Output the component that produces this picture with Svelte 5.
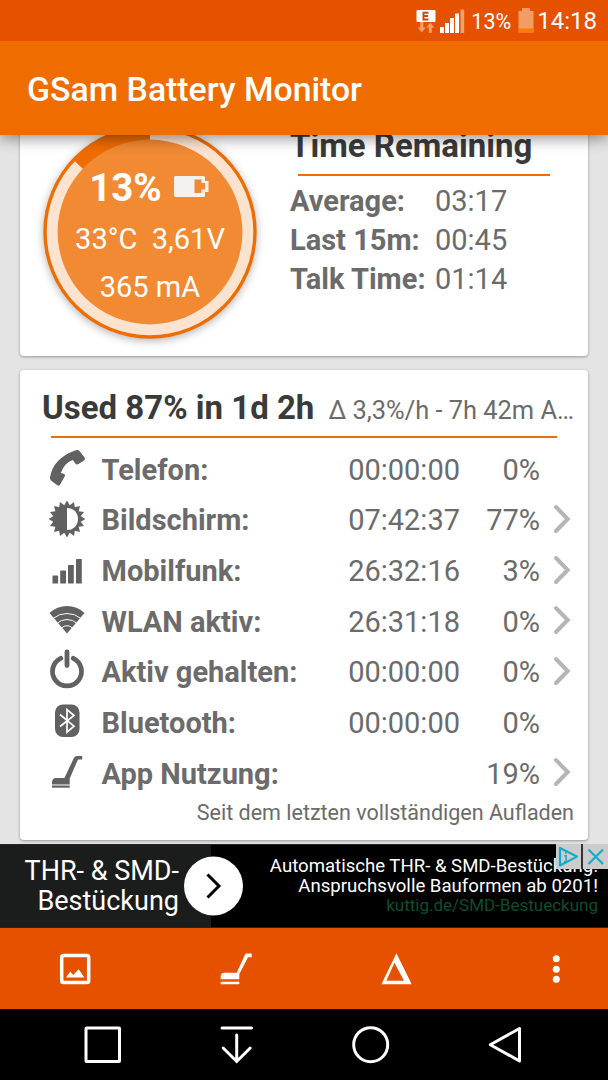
<script lang="ts">
    const remaining = [
        { label: 'Average:', time: '03:17' },
        { label: 'Last 15m:', time: '00:45' },
        { label: 'Talk Time:', time: '01:14' },
    ];

    const usage = [
        { icon: 'phone', label: 'Telefon:', time: '00:00:00', percent: '0%', link: false },
        { icon: 'screen', label: 'Bildschirm:', time: '07:42:37', percent: '77%', link: true },
        { icon: 'signal', label: 'Mobilfunk:', time: '26:32:16', percent: '3%', link: true },
        { icon: 'wifi', label: 'WLAN aktiv:', time: '26:31:18', percent: '0%', link: true },
        { icon: 'power', label: 'Aktiv gehalten:', time: '00:00:00', percent: '0%', link: true },
        { icon: 'bluetooth', label: 'Bluetooth:', time: '00:00:00', percent: '0%', link: false },
        { icon: 'app', label: 'App Nutzung:', time: '', percent: '19%', link: true },
    ];

    // Spiky rim of the brightness icon
    const spikes = 16;
    const sun = Array.from({ length: spikes * 2 }, (_, i) => {
        const r = i % 2 ? 14 : 18.4;
        const a = (Math.PI * i) / spikes;
        return `${(18 + r * Math.sin(a)).toFixed(2)},${(18 - r * Math.cos(a)).toFixed(2)}`;
    }).join(' ');
</script>

<div class="screen">
    <div class="status">
        <svg class="network" width="50" height="26" viewBox="415 7 50 26">
            <rect x="416.5" y="9" width="19" height="12" rx="1" fill="#fff" />
            <path d="M428.5 11.7h-5v6.8h5M423.5 15h4.5" fill="none" stroke="#c24a0c" stroke-width="1.9" />
            <path d="M420.3 21h3v5.5h2.4l-3.9 5-3.9-5h2.4zM428.8 32v-5.5h-2.4l3.9-5 3.9 5h-2.4v5.5z" fill="#f5a06a" />
            <path d="M440 26h3.8v6H440zM445 22h4v10h-4zM450 17h4v15h-4zM455 12.5h4V32h-4z" fill="#fff" />
            <path d="M460.5 8.5h3.7V32h-3.7z" fill="#f5a06a" />
        </svg>
        <span class="level">13%</span>
        <svg width="16" height="25" viewBox="0 0 16 25">
            <path d="M4 0h8v3h3.5v21.5H.5V3H4z" fill="#f29c66" />
            <path d="M.5 20.5h15v4H.5z" fill="#ff7a00" />
        </svg>
        <span class="clock">14:18</span>
    </div>

    <header>
        <h1>GSam Battery Monitor</h1>
    </header>

    <main>
        <section class="card summary">
            <div class="gauge">
                <svg width="216" height="216" viewBox="-108 -108 216 216">
                    <circle r="106.7" fill="#ef6c00" />
                    <circle r="103.3" fill="#fce3cf" />
                    <path d="M0 0V-105A105 105 0 0 0-76.5-71.9z" fill="#ef6c00" />
                    <circle r="92.4" fill="#f28a33" />
                </svg>
                <div class="readings">
                    <div class="charge">
                        13%
                        <svg width="35" height="21" viewBox="0 0 35 21">
                            <path fill-rule="evenodd" d="M1.5 0h28q1.5 0 1.5 1.5V5h3.5v11H31v3.5q0 1.5-1.5 1.5h-28Q0 21 0 19.5v-18Q0 0 1.5 0zM20.5 3.5V17h7v-3.5H31V7h-3.5V3.5z" fill="#f5f1ee" />
                        </svg>
                    </div>
                    <div>33°C&nbsp; 3,61V</div>
                    <div>365 mA</div>
                </div>
            </div>
            <div class="remaining">
                <h2>Time Remaining</h2>
                <hr />
                {#each remaining as row}
                    <div class="estimate">
                        <b>{row.label}</b>
                        <span>{row.time}</span>
                    </div>
                {/each}
            </div>
        </section>

        <section class="card usage">
            <div class="heading">
                <h2>Used 87% in 1d 2h</h2>
                <span>Δ 3,3%/h - 7h 42m A…</span>
            </div>
            <hr />
            {#each usage as row}
                <div class="row">
                    <svg class="icon" width="36" height="36" viewBox="0 0 36 36">
                        {#if row.icon === 'phone'}
                            <path d="M26 .5q3-1.3 4.5.5l5 6.5q1.3 1.7-.5 3L29.5 14q-1.8 1-3.2-.5L23.8 10q-8 2.5-12 13l3 .8q2 .7 1 2.500l-4.500 8q-1.300 2.200-3.300.8l-5.500-4.100q-1.800-1.500-1.500-3.500Q4 8.500 26 .5z" />
                        {:else if row.icon === 'screen'}
                            <polygon points={sun} />
                            <path d="M18 7c7 0 11 5 11 11s-4 11-11 11z" fill="#fff" />
                        {:else if row.icon === 'signal'}
                            <rect x="3.5" y="24.5" width="5.6" height="8" rx=".6" />
                            <rect x="11.2" y="19.5" width="5.8" height="13" rx=".6" />
                            <rect x="19" y="14" width="5.8" height="18.5" rx=".6" />
                            <rect x="27" y="8" width="5.8" height="24.5" rx=".6" />
                        {:else if row.icon === 'wifi'}
                            <path d="M18 31.5.5 11Q8 4 18 4t17.5 7z" />
                            <path d="M4 16.500Q10 11.500 18 11.500t14 5M8 21.500q4-4 10-4t10 4M12.500 26q2.500-2.300 5.500-2.300t5.500 2.300" fill="none" stroke="#fff" stroke-width="1" />
                        {:else if row.icon === 'power'}
                            <path d="M11.7 5.3a14.5 14.5 0 1 0 12.6 0M18-1v13.500" fill="none" stroke="#616161" stroke-width="4.8" stroke-linecap="round" />
                        {:else if row.icon === 'bluetooth'}
                            <rect x="6" y="1.5" width="24.5" height="32.5" rx="8" />
                            <path d="m11 11.500 14 11.700-7 6v-22.700l7 6L11 23.500" fill="none" stroke="#fff" stroke-width="1.7" />
                        {:else}
                            <path d="M3 30.500V28Q3.500 24 7 24h8.500L25 3.700Q26 2 28 2h5.200v3.400H29l-8.300 19.100v6z" />
                            <path d="M3 31.500h17.700v2.200H3z" />
                        {/if}
                    </svg>
                    <b>{row.label}</b>
                    <span class="time">{row.time}</span>
                    <span class="percent">{row.percent}</span>
                    {#if row.link}
                        <svg class="chevron" width="18" height="30" viewBox="0 0 18 30">
                            <path d="m3 3 11.700 12L3 27" />
                        </svg>
                    {/if}
                </div>
            {/each}
            <p>Seit dem letzten vollständigen Aufladen</p>
        </section>
    </main>

    <aside>
        <div class="ad-title">THR- &amp; SMD-<br />Bestückung</div>
        <svg class="ad-arrow" width="60" height="60" viewBox="0 0 60 60">
            <circle cx="29.5" cy="30" r="29.5" fill="#fff" />
            <path d="m23.5 18.5 11.5 11.5-11.5 11.5" fill="none" stroke="#000" stroke-width="3" />
        </svg>
        <div class="ad-text">
            <div>Automatische THR- &amp; SMD-Bestückung!</div>
            <div>Anspruchsvolle Bauformen ab 0201!</div>
            <div class="ad-link">kuttig.de/SMD-Bestueckung</div>
        </div>
        <div class="ad-choices">
            <svg width="25" height="25" viewBox="0 0 25 25">
                <path d="M4 4v17.5L21 12.6z" stroke-linejoin="round" />
                <path d="M9.8 8v1.800M8.300 11.700h1.800v6M8 17.700h4" stroke-width="1.5" />
            </svg>
            <svg width="25" height="25" viewBox="0 0 25 25">
                <path d="m5.5 5.500 14.500 14.500m0-14.500-14.500 14.500" />
            </svg>
        </div>
    </aside>

    <div class="toolbar">
        <svg width="36" height="36" viewBox="0 0 36 36">
            <rect x="4.7" y="4.5" width="27" height="27" rx="1.8" fill="none" stroke="#fff" stroke-width="3.5" />
            <path d="m9 26.500 4.200-6 3 3.500 5.500-5.700 5.600 8.200z" />
        </svg>
        <svg width="36" height="36" viewBox="0 0 36 36">
            <path d="M2.700 28.200v-3q0-3.400 3.500-3.400h12.500L27.500 2.500h6.200v3.700H30l-8.700 17v5zM2.700 30.800h18.600v2.400H2.700z" />
        </svg>
        <svg width="36" height="36" viewBox="0 0 36 36">
            <path fill-rule="evenodd" d="M18.400 2.200 33.700 33.200H3.400zM16.400 11.800l-8 18H26z" />
        </svg>
        <svg width="36" height="36" viewBox="0 0 36 36">
            <circle cx="17.3" cy="7.8" r="3.5" />
            <circle cx="17.3" cy="18.2" r="3.5" />
            <circle cx="17.3" cy="28.3" r="3.5" />
        </svg>
    </div>

    <nav>
        <svg width="40" height="40" viewBox="0 0 40 40">
            <rect x="3" y="3" width="33.5" height="33.5" rx=".5" />
        </svg>
        <svg width="40" height="40" viewBox="0 0 40 40">
            <path d="M5 3h29.500M19.700 10v26M6.200 23l13.500 13.500L33.200 23" stroke-linecap="round" />
        </svg>
        <svg width="40" height="40" viewBox="0 0 40 40">
            <circle cx="19.7" cy="19.7" r="17" />
        </svg>
        <svg width="40" height="40" viewBox="0 0 40 40">
            <path d="M34.500 3.500v32.500L5.300 19.700z" stroke-linejoin="round" />
        </svg>
    </nav>
</div>

<style>
    :global(body) {
        margin: 0;
    }

    .screen {
        display: flex;
        flex-direction: column;
        width: 608px;
        height: 1080px;
        overflow: hidden;
        font-family: Roboto, sans-serif;
        background-color: #e4e4e4;
    }

    svg {
        display: block;
        flex-shrink: 0;
        overflow: visible;
    }

    h1,
    h2,
    p {
        margin: 0;
        font-weight: 500;
    }

    .status {
        position: relative;
        z-index: 2;
        display: flex;
        align-items: center;
        justify-content: flex-end;
        height: 41px;
        padding-right: 11px;
        box-sizing: border-box;
        color: #fff;
        background-color: #e65100;
    }

    .level {
        margin: 1px 7px 0 6px;
        font-size: 21.5px;
    }

    .clock {
        margin-left: 3px;
        padding-top: 1px;
        font-size: 24px;
    }

    header {
        position: relative;
        z-index: 1;
        height: 94px;
        padding-left: 27px;
        color: #fff;
        background-color: #ef6c00;
        box-shadow: 0 3px 14px rgba(0, 0, 0, 0.45);
    }

    h1 {
        font-size: 33.8px;
        line-height: 97px;
    }

    main {
        height: 709px;
        padding: 0 20px;
        overflow: hidden;
    }

    .card {
        box-sizing: border-box;
        border-radius: 4px;
        color: #6b6b6b;
        background-color: #fff;
        box-shadow: 0 1px 3px rgba(0, 0, 0, 0.35);
        font-size: 29px;
    }

    .card b {
        font-weight: 700;
    }

    h2 {
        color: #3a3a3a;
        font-size: 33px;
        font-weight: 700;
        line-height: 40px;
        white-space: nowrap;
    }

    hr {
        height: 2px;
        margin: 0;
        border: 0;
        background-color: #ef6c00;
    }

    /* Scrolled partly beneath the title bar */
    .summary {
        display: flex;
        height: 251px;
        margin-top: -30px;
        padding: 19px 22px 0;
    }

    .gauge {
        display: grid;
        width: 216px;
        height: 216px;
        border-radius: 50%;
    }

    .gauge > * {
        grid-area: 1 / 1;
    }

    .gauge > svg {
        filter: drop-shadow(0 2px 4px rgba(0, 0, 0, 0.3));
    }

    .readings {
        z-index: 1;
        padding-top: 38px;
        color: #fff;
        font-size: 29px;
        line-height: 47.5px;
        text-align: center;
    }

    .charge {
        display: flex;
        align-items: center;
        justify-content: center;
        gap: 12px;
        height: 52px;
        padding-bottom: 2px;
        margin-right: 2px;
        font-size: 38.5px;
        font-weight: 700;
    }

    .charge svg {
        margin-bottom: 4px;
    }

    .remaining {
        width: 268px;
        padding: 2px 0 0 32px;
    }

    .remaining hr {
        width: 252px;
        margin: 8px 0 6px 8px;
    }

    .estimate {
        display: grid;
        grid-template-columns: 145px auto;
        line-height: 38.8px;
        white-space: nowrap;
    }

    .usage {
        height: 469.5px;
        margin-top: 14px;
        padding: 18px 14px 0 22px;
    }

    .heading {
        display: flex;
        align-items: baseline;
        justify-content: space-between;
    }

    .heading span {
        font-size: 25.4px;
        line-height: 30px;
        white-space: nowrap;
    }

    .usage hr {
        margin: 8px 17px 6.7px 9px;
    }

    .row {
        display: grid;
        grid-template-columns: 52.5px 239.5px 119px 80px auto;
        align-items: center;
        height: 50.65px;
        padding-left: 7px;
        margin-right: -6px;
        line-height: 50.65px;
        white-space: nowrap;
    }

    .icon {
        margin-bottom: 4px;
        fill: #616161;
    }

    .time,
    .percent {
        text-align: right;
    }

    .chevron {
        margin: 0 0 3px 13px;
        fill: none;
        stroke: #b5b5b5;
        stroke-width: 4;
        stroke-linecap: round;
    }

    .usage p {
        font-size: 21.5px;
        font-weight: 400;
        line-height: 28px;
        text-align: right;
    }

    aside {
        position: relative;
        display: flex;
        align-items: center;
        height: 84px;
        box-sizing: border-box;
        border: solid #262626;
        border-width: 1px 0;
        color: #fff;
        background: linear-gradient(90deg, #1b1d1c 211px, #000 211px);
    }

    .ad-title {
        width: 179px;
        font-size: 27px;
        line-height: 30px;
        text-align: right;
        white-space: nowrap;
    }

    .ad-arrow {
        margin-left: 5px;
    }

    .ad-text {
        flex: 1;
        padding: 0 10px 3px 0;
        font-size: 18.6px;
        line-height: 20px;
        text-align: right;
        white-space: nowrap;
    }

    .ad-link {
        color: #0b4f2d;
        font-size: 17px;
        line-height: 18px;
    }

    .ad-choices {
        position: absolute;
        top: -1px;
        right: 0;
        display: flex;
        gap: 2px;
        background-color: #333;
    }

    .ad-choices svg {
        background-color: #ccc;
        fill: none;
        stroke: #14acce;
        stroke-width: 2.2;
    }

    .toolbar {
        display: flex;
        align-items: center;
        justify-content: space-between;
        height: 81px;
        padding: 0 33px 0 57px;
        background-color: #e65100;
    }

    .toolbar svg {
        fill: #fff;
    }

    nav {
        display: flex;
        flex: 1;
        align-items: center;
        justify-content: space-around;
        padding: 0 36px;
        background-color: #000;
    }

    nav svg {
        fill: none;
        stroke: #fff;
        stroke-width: 3;
    }
</style>
